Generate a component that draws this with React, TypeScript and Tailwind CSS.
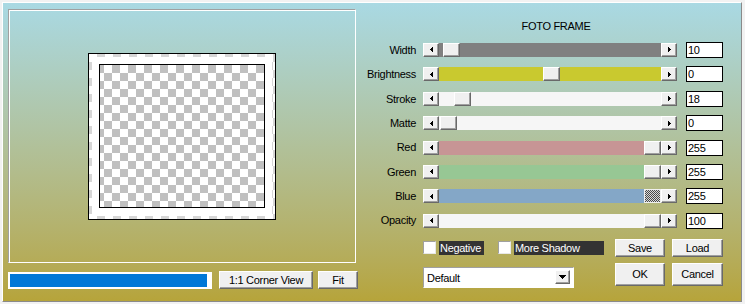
import React from 'react';

type Row = {
  label: string;
  value: string;
  track: string;
  thumb: number;
  dither?: boolean;
};

const raised =
  'bg-[#f0f0f0] border border-t-white border-l-white border-r-[#696969] border-b-[#696969] shadow-[inset_-1px_-1px_0_#a0a0a0]';

const rows: Row[] = [
  { label: 'Width', value: '10', track: 'bg-[#808080]', thumb: 4 },
  { label: 'Brightness', value: '0', track: 'bg-[#c9c92f]', thumb: 104 },
  { label: 'Stroke', value: '18', track: 'bg-[#f6f6f6]', thumb: 15 },
  { label: 'Matte', value: '0', track: 'bg-[#f6f6f6]', thumb: 1 },
  { label: 'Red', value: '255', track: 'bg-[#c79595]', thumb: 205 },
  { label: 'Green', value: '255', track: 'bg-[#97c794]', thumb: 205 },
  { label: 'Blue', value: '255', track: 'bg-[#84a7c7]', thumb: 205, dither: true },
  { label: 'Opacity', value: '100', track: 'bg-[#f6f6f6]', thumb: 205 },
];

const Arrow = ({ dir }: { dir: 'left' | 'right' }) => (
  <div className={`w-[16px] h-full flex items-center justify-center ${raised}`}>
    <svg width="3" height="5" shapeRendering="crispEdges" className={dir === 'right' ? 'rotate-180' : ''}>
      <rect x="0" y="2" width="1" height="1" fill="#000" />
      <rect x="1" y="1" width="1" height="3" fill="#000" />
      <rect x="2" y="0" width="1" height="5" fill="#000" />
    </svg>
  </div>
);

const SliderRow = ({ row }: { row: Row }) => (
  <div className="flex items-center h-[24.4px]">
    <div className="w-[56px] text-right whitespace-nowrap">{row.label}</div>
    <div className="ml-[7px] flex h-[14px] w-[254px]">
      <Arrow dir="left" />
      <div className={`relative flex-1 ${row.track}`}>
        <div
          className={`absolute top-0 h-full w-[17px] ${
            row.dither
              ? 'bg-[image:repeating-conic-gradient(#4a4a4a_0_25%,#d8d8d8_0_50%)] bg-[length:2px_2px] border border-[#f0f0f0]'
              : raised
          }`}
          style={{ left: row.thumb }}
        />
      </div>
      <Arrow dir="right" />
    </div>
    <div className="ml-[9px] w-[37px] h-[16px] bg-white border border-black pl-[1px] leading-[14px]">{row.value}</div>
  </div>
);

const Button = ({ label, className }: { label: string; className: string }) => (
  <div className={`flex items-center justify-center ${raised} ${className}`}>{label}</div>
);

const Check = ({ label, w }: { label: string; w: string }) => (
  <div className="flex items-center">
    <div className="w-[13px] h-[13px] bg-white border border-t-[#a0a0a0] border-l-[#a0a0a0] border-r-[#e8e8e8] border-b-[#e8e8e8]" />
    <div className={`ml-[3px] h-[14px] leading-[14px] bg-[#333333] text-white pl-[1px] ${w}`}>{label}</div>
  </div>
);

export default function App() {
  return (
    <div className="w-[745px] h-[304px] bg-[#f2f2f2] pl-[2px] pt-[2px] font-['Liberation_Sans',Arial,sans-serif] text-[11px] tracking-[-0.3px] text-black">
      <div className="w-[740px] h-[300px] flex border border-t-white border-l-white border-r-[#8a8a8a] border-b-[#8a8a8a] bg-linear-to-b from-[#a9d9e3] to-[#b6a43a]">
        {/* preview side */}
        <div className="w-[357px] shrink-0 pl-[5px] pt-[6px] flex flex-col">
          <div className="w-[348px] h-[254px] flex items-center justify-center border border-t-[#a0a0a0] border-l-[#a0a0a0] border-r-white border-b-white shadow-[inset_1px_1px_0_#fff]">
            <div className="w-[188px] h-[167px] border border-black p-[3px] bg-[image:conic-gradient(#d6d6d6_25%,#fff_0_50%,#d6d6d6_0_75%,#fff_0)] bg-[length:16px_16px] mt-[1px]">
              <div className="w-full h-full bg-white flex items-start justify-center pt-[7px]">
                <div className="w-[166px] h-[144px] border border-black bg-[image:conic-gradient(#c0c0c0_25%,#fff_0_50%,#c0c0c0_0_75%,#fff_0)] bg-[length:16px_16px] bg-[position:4px_0px]" />
              </div>
            </div>
          </div>
          <div className="mt-[8px] flex items-center">
            <div className="w-[204px] h-[17px] border-2 border-white bg-white pr-[3px]">
              <div className="w-full h-full bg-[#0078d7]" />
            </div>
            <Button label="1:1 Corner View" className="ml-[7px] w-[94px] h-[18px]" />
            <Button label="Fit" className="ml-[5px] w-[40px] h-[18px]" />
          </div>
        </div>

        {/* controls side */}
        <div className="flex flex-col">
          <div className="mt-[17px] ml-[63px] w-[266px] h-[13px] leading-[13px] text-center">FOTO FRAME</div>
          <div className="mt-[4.8px] flex flex-col">
            {rows.map(r => (
              <SliderRow key={r.label} row={r} />
            ))}
          </div>
          <div className="mt-[6px] ml-[63px] flex">
            <div className="w-[192px] flex flex-col">
              <div className="h-[18px] flex items-center">
                <Check label="Negative" w="w-[45px]" />
                <div className="ml-[14px]">
                  <Check label="More Shadow" w="w-[90px]" />
                </div>
              </div>
              <div className="mt-[10px] w-[151px] h-[21px] bg-white border border-t-[#a0a0a0] border-l-[#a0a0a0] border-r-white border-b-white flex items-center">
                <div className="flex-1 pl-[3px] pt-[1px]">Default</div>
                <div className={`w-[15px] h-[14px] mr-[3px] flex items-center justify-center ${raised}`}>
                  <svg width="7" height="4" shapeRendering="crispEdges">
                    <rect x="0" y="0" width="7" height="1" fill="#000" />
                    <rect x="1" y="1" width="5" height="1" fill="#000" />
                    <rect x="2" y="2" width="3" height="1" fill="#000" />
                    <rect x="3" y="3" width="1" height="1" fill="#000" />
                  </svg>
                </div>
              </div>
            </div>
            <div className="flex flex-col">
              <div className="flex">
                <Button label="Save" className="w-[50px] h-[18px]" />
                <Button label="Load" className="ml-[7px] w-[51px] h-[18px]" />
              </div>
              <div className="mt-[6px] flex">
                <Button label="OK" className="w-[50px] h-[23px]" />
                <Button label="Cancel" className="ml-[7px] w-[51px] h-[23px]" />
              </div>
            </div>
          </div>
        </div>
      </div>
    </div>
  );
}
